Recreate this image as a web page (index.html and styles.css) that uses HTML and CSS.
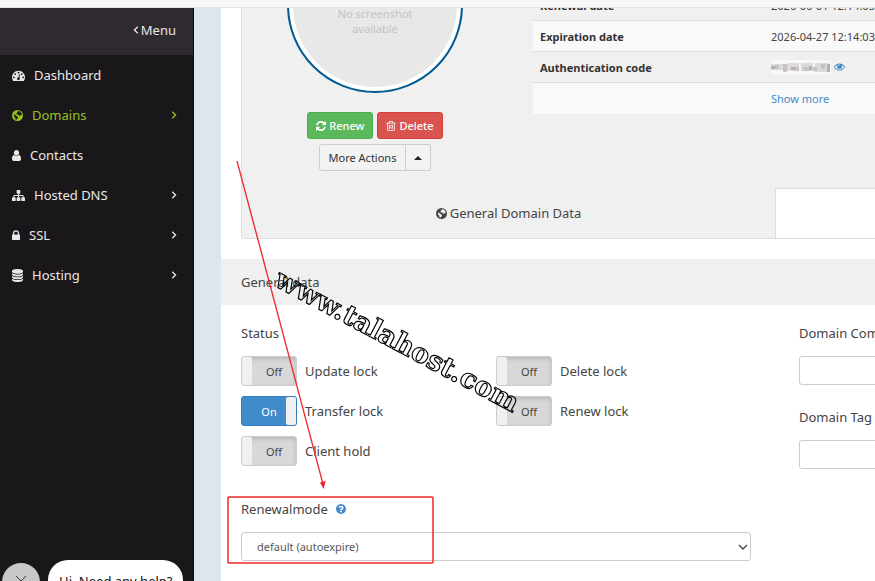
FILE: index.html
```
<!DOCTYPE html>
<html lang="en">

<head>
    <meta charset="UTF-8">
    <meta name="viewport" content="width=device-width, initial-scale=1.0">
    <title>Domain details</title>
    <link rel="stylesheet" href="styles.css">
</head>

<body>
    <svg class="sprite" aria-hidden="true">
        <symbol id="i-dashboard" viewBox="0 0 1792 1792">
            <path d="M384 1152q0-53-37.5-90.5t-90.5-37.5-90.5 37.5-37.5 90.5 37.5 90.5 90.5 37.5 90.5-37.5 37.5-90.5zm192-448q0-53-37.5-90.5t-90.5-37.5-90.5 37.5-37.5 90.5 37.5 90.5 90.5 37.5 90.5-37.5 37.5-90.5zm428 481l101-382q6-26-7.5-48.5t-38.5-29.5-48 6.5-30 39.5l-101 382q-60 5-107 43.5t-63 98.5q-20 77 20 146t117 89 146-20 89-117q16-60-6-117t-72-91zm660-33q0-53-37.5-90.5t-90.5-37.5-90.5 37.5-37.5 90.5 37.5 90.5 90.5 37.5 90.5-37.5 37.5-90.5zm-640-640q0-53-37.5-90.5t-90.5-37.5-90.5 37.5-37.5 90.5 37.5 90.5 90.5 37.5 90.5-37.5 37.5-90.5zm448 192q0-53-37.5-90.5t-90.5-37.5-90.5 37.5-37.5 90.5 37.5 90.5 90.5 37.5 90.5-37.5 37.5-90.5zm320 448q0 261-141 483-19 29-54 29h-1402q-35 0-54-29-141-221-141-483 0-182 71-348t191-286 286-191 348-71 348 71 286 191 191 286 71 348z"/>
        </symbol>
        <symbol id="i-globe" viewBox="0 0 24 24">
            <path fill-rule="evenodd" d="M12 0a12 12 0 1 0 0 24a12 12 0 1 0 0-24zM13 2.500l4 1 3.500 3.500 1 4-2.500-0.500-1.500 2.500-2.500-1-1-2.500-3 0.500-2-2 2-1.500 0.500-2zM4 9.500l3 1.500 3.500 2.500 2.500 2-1 3-2.500 3-2-1.500-0.500-3.500-2.500-2.500z"/>
        </symbol>
        <symbol id="i-user" viewBox="256 0 1280 1792">
            <path d="M1536 1399q0 109-62.5 187t-150.5 78h-854q-88 0-150.5-78t-62.5-187q0-85 8.5-160.5t31.5-152 58.5-131 94-89 134.5-34.5q131 128 313 128t313-128q76 0 134.5 34.5t94 89 58.5 131 31.5 152 8.5 160.5zm-256-887q0 159-112.5 271.5t-271.5 112.5-271.5-112.5-112.5-271.5 112.5-271.5 271.5-112.5 271.5 112.5 112.5 271.5z"/>
        </symbol>
        <symbol id="i-sitemap" viewBox="0 0 1792 1792">
            <path d="M1792 1248v320q0 40-28 68t-68 28h-320q-40 0-68-28t-28-68v-320q0-40 28-68t68-28h96v-192h-512v192h96q40 0 68 28t28 68v320q0 40-28 68t-68 28h-320q-40 0-68-28t-28-68v-320q0-40 28-68t68-28h96v-192h-512v192h96q40 0 68 28t28 68v320q0 40-28 68t-68 28h-320q-40 0-68-28t-28-68v-320q0-40 28-68t68-28h96v-192q0-52 38-90t90-38h512v-192h-96q-40 0-68-28t-28-68v-320q0-40 28-68t68-28h320q40 0 68 28t28 68v320q0 40-28 68t-68 28h-96v192h512q52 0 90 38t38 90v192h96q40 0 68 28t28 68z"/>
        </symbol>
        <symbol id="i-lock" viewBox="320 128 1152 1536">
            <path d="M640 768h512v-192q0-106-75-181t-181-75-181 75-75 181v192zm832 96v576q0 40-28 68t-68 28h-960q-40 0-68-28t-28-68v-576q0-40 28-68t68-28h32v-192q0-184 132-316t316-132 316 132 132 316v192h32q40 0 68 28t28 68z"/>
        </symbol>
        <symbol id="i-database" viewBox="128 0 1536 1792">
            <path d="M896 768q237 0 443-43t325-127v170q0 69-103 128t-280 93.5-385 34.5-385-34.5-280-93.5-103-128v-170q119 84 325 127t443 43zm0 768q237 0 443-43t325-127v170q0 69-103 128t-280 93.5-385 34.5-385-34.5-280-93.5-103-128v-170q119 84 325 127t443 43zm0-384q237 0 443-43t325-127v170q0 69-103 128t-280 93.5-385 34.5-385-34.5-280-93.5-103-128v-170q119 84 325 127t443 43zm0-1152q208 0 385 34.5t280 93.5 103 128v128q0 69-103 128t-280 93.5-385 34.5-385-34.5-280-93.5-103-128v-128q0-69 103-128t280-93.5 385-34.5z"/>
        </symbol>
        <symbol id="i-refresh" viewBox="128 128 1536 1536">
            <path d="M1639 1056q0 5-1 7-64 268-268 434.5t-478 166.5q-146 0-282.5-55t-243.5-157l-129 129q-19 19-45 19t-45-19-19-45v-448q0-26 19-45t45-19h448q26 0 45 19t19 45-19 45l-137 137q71 66 161 102t187 36q134 0 250-65t186-179q11-17 53-117 8-23 30-23h192q13 0 22.5 9.5t9.5 22.5zm25-800v448q0 26-19 45t-45 19h-448q-26 0-45-19t-19-45 19-45l138-138q-148-137-349-137-134 0-250 65t-186 179q-11 17-53 117-8 23-30 23h-199q-13 0-22.5-9.5t-9.5-22.5v-7q65-268 270-434.5t480-166.5q146 0 284 55.5t245 156.5l130-129q19-19 45-19t45 19 19 45z"/>
        </symbol>
        <symbol id="i-trash" viewBox="192 128 1408 1536">
            <path d="M704 736v576q0 14-9 23t-23 9h-64q-14 0-23-9t-9-23v-576q0-14 9-23t23-9h64q14 0 23 9t9 23zm256 0v576q0 14-9 23t-23 9h-64q-14 0-23-9t-9-23v-576q0-14 9-23t23-9h64q14 0 23 9t9 23zm256 0v576q0 14-9 23t-23 9h-64q-14 0-23-9t-9-23v-576q0-14 9-23t23-9h64q14 0 23 9t9 23zm128 724v-948h-896v948q0 22 7 40.5t14.5 27 10.5 8.5h832q3 0 10.5-8.5t14.5-27 7-40.5zm-672-1076h448l-48-117q-7-9-17-11h-317q-10 2-17 11zm928 32v64q0 14-9 23t-23 9h-96v948q0 83-47 143.5t-113 60.5h-832q-66 0-113-58.5t-47-141.5v-952h-96q-14 0-23-9t-9-23v-64q0-14 9-23t23-9h309l70-167q15-37 54-63t79-26h320q40 0 79 26t54 63l70 167h309q14 0 23 9t9 23z"/>
        </symbol>
        <symbol id="i-eye" viewBox="0 320 1792 1280">
            <path d="M1664 960q-152-236-381-353 61 104 61 225 0 185-131.5 316.5t-316.5 131.5-316.5-131.5-131.5-316.5q0-121 61-225-229 117-381 353 133 205 333.5 326.5t434.5 121.5 434.5-121.5 333.5-326.5zm-720-384q0-20-14-34t-34-14q-125 0-214.5 89.5t-89.5 214.5q0 20 14 34t34 14 34-14 14-34q0-86 61-147t147-61q20 0 34-14t14-34zm848 384q0 34-20 69-140 230-376.5 368.5t-499.5 138.5-499.5-139-376.5-368q-20-35-20-69t20-69q140-229 376.5-368t499.5-139 499.5 139 376.5 368q20 35 20 69z"/>
        </symbol>
        <symbol id="i-question" viewBox="128 128 1536 1536">
            <path d="M1024 1376v-192q0-14-9-23t-23-9h-192q-14 0-23 9t-9 23v192q0 14 9 23t23 9h192q14 0 23-9t9-23zm256-672q0-88-55.5-163t-138.5-116-170-41q-243 0-371 213-15 24 8 42l132 100q7 6 19 6 16 0 25-12 53-68 86-92 34-24 86-24 48 0 85.5 26t37.5 59q0 38-20 61t-68 45q-63 28-115.5 86.5t-52.5 125.5v36q0 14 9 23t23 9h192q14 0 23-9t9-23q0-19 21.5-49.5t54.5-49.5q32-18 49-28.5t46-35 44.5-48 28-60.5 12.5-81zm384 192q0 209-103 385.5t-279.5 279.5-385.5 103-385.5-103-279.5-279.5-103-385.5 103-385.5 279.5-279.5 385.5-103 385.5 103 279.5 279.5 103 385.5z"/>
        </symbol>
        <symbol id="i-angle" viewBox="0 0 6 8">
            <path d="M1.2 0.8L4.6 4L1.2 7.2" fill="none" stroke="currentColor" stroke-width="1.3"/>
        </symbol>
    </svg>

    <div class="topbar"></div>
    <div class="layout">
        <nav class="sidebar">
            <a class="menu-toggle" href="#"><svg class="angle flip"><use href="#i-angle"/></svg>Menu</a>
            <a class="item" href="#"><svg class="icon"><use href="#i-dashboard"/></svg>Dashboard</a>
            <a class="item active" href="#"><svg class="icon w11"><use href="#i-globe"/></svg>Domains<svg class="angle"><use href="#i-angle"/></svg></a>
            <a class="item" href="#"><svg class="icon w9"><use href="#i-user"/></svg>Contacts</a>
            <a class="item" href="#"><svg class="icon"><use href="#i-sitemap"/></svg>Hosted DNS<svg class="angle"><use href="#i-angle"/></svg></a>
            <a class="item" href="#"><svg class="icon w8"><use href="#i-lock"/></svg>SSL<svg class="angle"><use href="#i-angle"/></svg></a>
            <a class="item" href="#"><svg class="icon w11"><use href="#i-database"/></svg>Hosting<svg class="angle"><use href="#i-angle"/></svg></a>
        </nav>

        <main class="main">
            <div class="content">
                <section class="panel">
                    <div class="summary">
                        <div class="preview">
                            <div class="thumb"><span>No screenshot<br>available</span></div>
                            <div class="buttons">
                                <button class="btn green" type="button"><svg><use href="#i-refresh"/></svg>Renew</button>
                                <button class="btn red" type="button"><svg><use href="#i-trash"/></svg>Delete</button>
                            </div>
                            <div class="btn-group">
                                <button class="btn plain" type="button">More Actions</button>
                                <button class="btn plain drop" type="button" aria-label="Open actions"><span class="caret"></span></button>
                            </div>
                        </div>
                        <table class="facts">
                            <tr>
                                <th>Renewal date</th>
                                <td>2026-06-01 12:14:03.000</td>
                            </tr>
                            <tr>
                                <th>Expiration date</th>
                                <td>2026-04-27 12:14:03.000</td>
                            </tr>
                            <tr>
                                <th>Authentication code</th>
                                <td>
                                    <div class="code">
                                        <svg class="masked" viewBox="0 0 60 14">
                                            <path fill="#f8f8f8" d="M0 0h60v14H0z"/>
                                            <path fill="#dcdadb" d="M0 4h12v6H0zM16 3h12v8H16zM30 3h12v8H30zM44 3h14v9H44z"/>
                                            <path fill="#c6c2c6" d="M4 5h4v4H4zM12 4h4v8h-4zM24 7h4v4h-4zM32 7h6v4h-6zM42 7h4v4h-4zM50 4h4v5h-4z"/>
                                            <path fill="#b2b0b3" d="M0 6h4v3H0zM20 7h4v3h-4zM38 6h3v4h-3zM56 4h3v8h-3z"/>
                                        </svg>
                                        <a href="#" aria-label="Show code"><svg class="eye"><use href="#i-eye"/></svg></a>
                                    </div>
                                </td>
                            </tr>
                            <tr>
                                <th></th>
                                <td><a href="#">Show more</a></td>
                            </tr>
                        </table>
                    </div>
                    <div class="tabs">
                        <a class="tab" href="#"><svg><use href="#i-globe"/></svg>General Domain Data</a>
                        <a class="tab open" href="#" aria-label="Contacts"></a>
                    </div>
                </section>

                <h2 class="bar">General data</h2>

                <form class="form">
                    <div class="col">
                        <div class="title">Status</div>
                        <div class="locks">
                            <label class="lock"><span class="switch"><input type="checkbox"><span>Off</span></span>Update lock</label>
                            <label class="lock"><span class="switch"><input type="checkbox"><span>Off</span></span>Delete lock</label>
                            <label class="lock"><span class="switch"><input type="checkbox" checked><span>On</span></span>Transfer lock</label>
                            <label class="lock"><span class="switch"><input type="checkbox"><span>Off</span></span>Renew lock</label>
                            <label class="lock"><span class="switch"><input type="checkbox"><span>Off</span></span>Client hold</label>
                        </div>
                        <label class="title" for="mode">Renewalmode <svg class="help"><use href="#i-question"/></svg></label>
                        <div class="select">
                            <select class="field" id="mode">
                                <option>default (autoexpire)</option>
                            </select>
                            <svg viewBox="0 0 10 6"><path d="M1 1l4 4 4-4" fill="none" stroke="#444" stroke-width="1.4"/></svg>
                        </div>
                    </div>
                    <div class="col">
                        <label class="title" for="comment">Domain Comment</label>
                        <input class="field" id="comment" type="text">
                        <label class="title" for="tag">Domain Tag</label>
                        <input class="field" id="tag" type="text">
                    </div>
                </form>
            </div>
        </main>
    </div>

    <div class="chat">
        <button class="chat-close" type="button" aria-label="Close"><svg viewBox="0 0 12 12"><path d="M1 1l10 10M11 1L1 11" stroke="#333" stroke-width="1"/></svg></button>
        <div class="chat-text">Hi. Need any help?</div>
    </div>

    <!-- notes drawn over the page -->
    <svg class="notes" width="600" height="581">
        <path d="M237 161L323 484" fill="none" stroke="#ee2a2a" stroke-width="1.3"/>
        <path d="M320 482.500l5.500-1.500-1.800 8z" fill="#ee1c24"/>
        <rect x="228" y="497" width="205" height="66" rx="1" fill="none" stroke="#ee2a2a" stroke-width="1.5"/>
        <text class="mark" transform="translate(273 285) rotate(28)">www.talahost.com</text>
    </svg>
</body>

</html>
```
FILE: styles.css
```
* {
    box-sizing: border-box;
}

html,
body {
    height: 100%;
}

body {
    margin: 0;
    overflow: hidden;
    display: flex;
    flex-direction: column;
    background-color: #fff;
    color: #444;
    font-family: "Noto Sans", "Open Sans", sans-serif;
    font-size: 13px;
    line-height: 20px;
}

a {
    color: #428bca;
    text-decoration: none;
}

svg {
    fill: currentColor;
    flex: none;
}

button,
input,
select {
    font-family: inherit;
    margin: 0;
}

.sprite {
    position: absolute;
    width: 0;
    height: 0;
}

.topbar {
    flex: none;
    height: 8px;
    background-color: #f7f7f7;
    border-bottom: 1px solid #e3e3e3;
}

.layout {
    flex: 1;
    min-height: 0;
    display: flex;
    background-color: #dde5ed;
}

/* sidebar */
.sidebar {
    flex: none;
    width: 194px;
    background-color: #1a171b;
    border-right: 1px solid #0c0a0d;
}

.menu-toggle,
.item {
    display: flex;
    align-items: center;
    color: #e8e8e8;
}

.menu-toggle {
    height: 47px;
    padding: 0 17px 3px;
    justify-content: flex-end;
    gap: 2px;
    background-color: #2e2a30;
}

.item {
    height: 40px;
    padding: 0 16px 0 12px;
}

.active {
    color: #95c11f;
}

.icon {
    width: 13px;
    height: 13px;
    margin-right: 9px;
}

.w11 {
    width: 11px;
}

.w9 {
    width: 9px;
}

.w8 {
    width: 8px;
}

.angle {
    width: 6px;
    height: 8px;
}

.item .angle {
    margin-left: auto;
}

.flip {
    transform: scaleX(-1);
}

/* content is wider than small windows and runs off to the right */
.main {
    flex: 1;
    min-width: 0;
    margin-left: 27px;
    overflow: hidden;
    background-color: #fff;
}

.content {
    min-width: 1108px;
}

.panel {
    margin: 0 20px;
    background-color: #f0f0f0;
    border: 1px solid #ddd;
    border-top: 0;
    border-radius: 0 0 3px 3px;
}

.summary {
    height: 180px;
    display: flex;
    gap: 25px;
    overflow: hidden;
}

.preview {
    width: 266px;
    display: flex;
    flex-direction: column;
    align-items: center;
    margin-top: -91px;
}

.thumb {
    flex: none;
    width: 176px;
    height: 176px;
    padding-top: 87px;
    border: 2px solid #005b93;
    border-radius: 50%;
    background-color: #e8e8e8;
    box-shadow: inset 0 0 0 4px #fff;
    color: #c3c3c3;
    font-size: 11px;
    line-height: 15px;
    text-align: center;
}

.buttons {
    display: flex;
    gap: 4px;
    margin: 19px 0 5px;
}

.btn {
    height: 27px;
    padding: 0 8px;
    display: flex;
    align-items: center;
    gap: 3px;
    border: 1px solid #4cae4c;
    border-radius: 3px;
    color: #fff;
    font-size: 11px;
    font-weight: 500;
}

.btn svg {
    width: 10px;
    height: 10px;
}

.green {
    background-color: #5cb85c;
}

.red {
    background-color: #d9534f;
    border-color: #d43f3a;
}

.btn-group {
    display: flex;
}

.plain {
    padding: 0 9px;
    background-color: #f2f2f2;
    border-color: #ccc;
    color: #333;
    font-weight: 400;
    border-radius: 3px 0 0 3px;
}

.drop {
    padding: 0 8px;
    border-left: 0;
    border-radius: 0 3px 3px 0;
}

.caret {
    border: 4px solid transparent;
    border-top: 0;
    border-bottom-color: #222;
}

.facts {
    flex: 1;
    align-self: flex-start;
    margin-top: -19px;
    border-collapse: collapse;
    table-layout: fixed;
    font-size: 11px;
    line-height: 15px;
}

.facts th,
.facts td {
    height: 31px;
    padding: 0 7px;
    text-align: left;
    border-top: 1px solid #ddd;
}

.facts th {
    width: 231px;
    color: #333;
    font-weight: 700;
}

.facts tr:nth-child(even) {
    background-color: #f9f9f9;
}

.code {
    display: flex;
    align-items: center;
    gap: 3px;
}

.code a {
    display: flex;
}

.masked {
    width: 60px;
    height: 14px;
}

.eye {
    width: 11px;
    height: 8px;
}

.tabs {
    display: grid;
    grid-template-columns: 1fr 1fr;
}

.tab {
    height: 50px;
    display: flex;
    align-items: center;
    justify-content: center;
    gap: 3px;
    color: #444;
}

.tab svg {
    width: 11px;
    height: 11px;
}

.open {
    background-color: #fff;
    border: 1px solid #ddd;
    border-width: 1px 0 0 1px;
}

.bar {
    margin: 20px 0 0;
    padding: 13px 20px;
    background-color: #f0f0f0;
    font-size: 13px;
    font-weight: 400;
}

/* form */
.form {
    display: grid;
    grid-template-columns: 1fr 1fr;
    gap: 48px;
    padding: 18px 20px;
}

.title {
    display: flex;
    align-items: center;
    gap: 8px;
    margin-bottom: 13px;
}

.locks {
    display: grid;
    grid-template-columns: 1fr 1fr;
    gap: 10px 0;
    margin-bottom: 33px;
}

.lock {
    display: flex;
    align-items: center;
    gap: 8px;
}

.switch {
    position: relative;
    display: flex;
    width: 56px;
    height: 30px;
    font-size: 11px;
}

.switch input {
    appearance: none;
    width: 100%;
    height: 100%;
    border: 1px solid #ccc;
    border-radius: 3px;
    background-color: #d8d8d8;
    box-shadow: inset 0 2px 4px rgba(0, 0, 0, .15);
}

.switch input::before {
    content: "";
    display: block;
    width: 10px;
    height: 28px;
    border-radius: 2px;
    background-color: #f0f0f0;
}

.switch span {
    position: absolute;
    top: 6px;
    left: 10px;
    right: 0;
    text-align: center;
}

.switch input:checked {
    background-color: #428bca;
    border-color: #357ebd;
    box-shadow: none;
}

.switch input:checked::before {
    margin-left: auto;
}

.switch input:checked + span {
    left: 0;
    color: #fff;
}

.field {
    width: 100%;
    height: 29px;
    display: block;
    margin-bottom: 22px;
    border: 1px solid #ccc;
    border-radius: 3px;
    background-color: #fff;
}

.select {
    position: relative;
}

select.field {
    appearance: none;
    padding: 0 15px;
    color: #555;
    font-size: 11px;
}

.select svg {
    position: absolute;
    right: 3px;
    top: 12px;
    width: 10px;
    height: 6px;
}

.help {
    width: 10px;
    height: 10px;
    color: #428bca;
}

/* chat teaser */
.chat {
    position: fixed;
    left: 2px;
    bottom: -20px;
    display: flex;
    align-items: flex-end;
    gap: 8px;
}

.chat-close {
    width: 38px;
    height: 38px;
    padding: 0;
    border: 0;
    border-radius: 50%;
    background-color: #c8c8c8;
}

.chat-close svg {
    width: 12px;
    height: 12px;
}

.chat-text {
    padding: 11px 11px 10px;
    border-radius: 20px;
    background-color: #fff;
    color: #111;
    font-size: 13px;
}

.notes {
    position: absolute;
    left: 0;
    top: 0;
    pointer-events: none;
}

.mark {
    fill: none;
    stroke: #000;
    stroke-width: 1.2px;
    font-family: "DejaVu Serif", serif;
    font-size: 27px;
    font-weight: 700;
}
```
